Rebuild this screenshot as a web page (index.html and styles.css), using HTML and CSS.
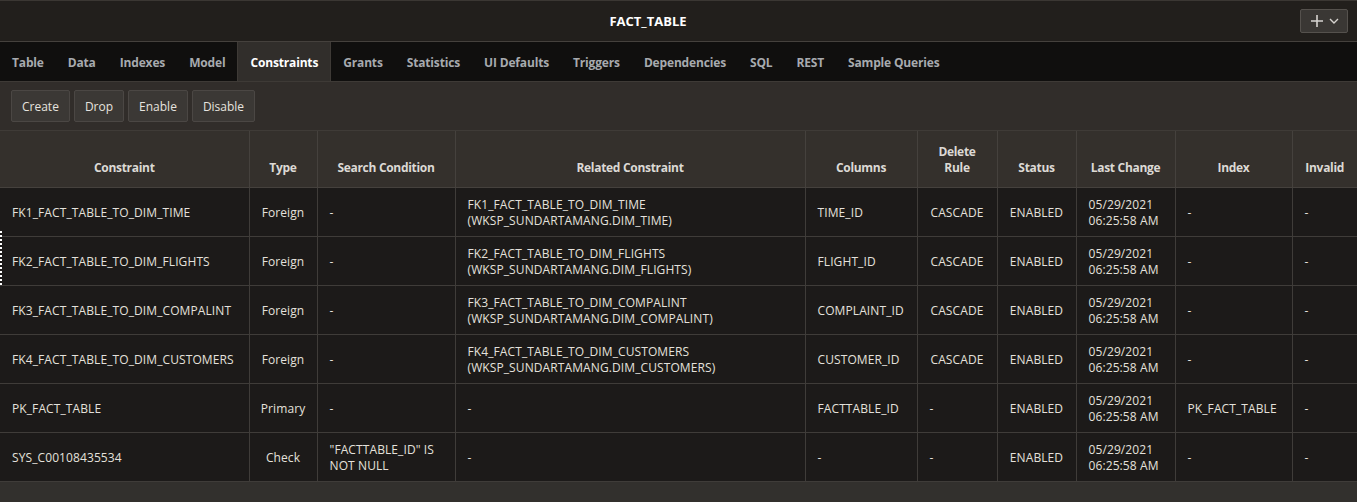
FILE: index.html
```html
<!DOCTYPE html>
<html>
<head>
<meta charset="utf-8">
<link rel="stylesheet" href="styles.css">
</head>
<body>
<div class="page">
  <header class="titlebar">
    <h1 class="title">FACT_TABLE</h1>
    <button class="menu-btn" type="button">
      <svg width="14" height="14" viewBox="0 0 14 14"><path d="M7 1v12M1 7h12" stroke="#d6d3cf" stroke-width="1.6" fill="none"/></svg>
      <svg width="10" height="8" viewBox="0 0 10 8"><path d="M1 2l4 4 4-4" stroke="#d6d3cf" stroke-width="1.4" fill="none"/></svg>
    </button>
  </header>
  <nav class="tabs">
    <span class="tab">Table</span>
    <span class="tab">Data</span>
    <span class="tab">Indexes</span>
    <span class="tab">Model</span>
    <span class="tab active">Constraints</span>
    <span class="tab">Grants</span>
    <span class="tab">Statistics</span>
    <span class="tab">UI Defaults</span>
    <span class="tab">Triggers</span>
    <span class="tab">Dependencies</span>
    <span class="tab">SQL</span>
    <span class="tab">REST</span>
    <span class="tab">Sample Queries</span>
  </nav>
  <div class="toolbar">
    <button class="btn" type="button">Create</button>
    <button class="btn" type="button">Drop</button>
    <button class="btn" type="button">Enable</button>
    <button class="btn" type="button">Disable</button>
  </div>
  <table class="grid">
    <colgroup>
      <col class="c1"><col class="c2"><col class="c3"><col class="c4"><col class="c5">
      <col class="c6"><col class="c7"><col class="c8"><col class="c9"><col class="c10">
    </colgroup>
    <thead>
      <tr>
        <th>Constraint</th><th>Type</th><th>Search Condition</th><th>Related Constraint</th><th>Columns</th>
        <th>Delete<br>Rule</th><th>Status</th><th>Last Change</th><th>Index</th><th>Invalid</th>
      </tr>
    </thead>
    <tbody>
      <tr>
        <td class="first">FK1_FACT_TABLE_TO_DIM_TIME</td><td class="ctr">Foreign</td><td>-</td>
        <td>FK1_FACT_TABLE_TO_DIM_TIME<br>(WKSP_SUNDARTAMANG.DIM_TIME)</td><td>TIME_ID</td>
        <td class="ctr">CASCADE</td><td class="ctr">ENABLED</td><td>05/29/2021<br>06:25:58 AM</td><td>-</td><td>-</td>
      </tr>
      <tr>
        <td class="first focus">FK2_FACT_TABLE_TO_DIM_FLIGHTS</td><td class="ctr">Foreign</td><td>-</td>
        <td>FK2_FACT_TABLE_TO_DIM_FLIGHTS<br>(WKSP_SUNDARTAMANG.DIM_FLIGHTS)</td><td>FLIGHT_ID</td>
        <td class="ctr">CASCADE</td><td class="ctr">ENABLED</td><td>05/29/2021<br>06:25:58 AM</td><td>-</td><td>-</td>
      </tr>
      <tr>
        <td class="first">FK3_FACT_TABLE_TO_DIM_COMPALINT</td><td class="ctr">Foreign</td><td>-</td>
        <td>FK3_FACT_TABLE_TO_DIM_COMPALINT<br>(WKSP_SUNDARTAMANG.DIM_COMPALINT)</td><td>COMPLAINT_ID</td>
        <td class="ctr">CASCADE</td><td class="ctr">ENABLED</td><td>05/29/2021<br>06:25:58 AM</td><td>-</td><td>-</td>
      </tr>
      <tr>
        <td class="first">FK4_FACT_TABLE_TO_DIM_CUSTOMERS</td><td class="ctr">Foreign</td><td>-</td>
        <td>FK4_FACT_TABLE_TO_DIM_CUSTOMERS<br>(WKSP_SUNDARTAMANG.DIM_CUSTOMERS)</td><td>CUSTOMER_ID</td>
        <td class="ctr">CASCADE</td><td class="ctr">ENABLED</td><td>05/29/2021<br>06:25:58 AM</td><td>-</td><td>-</td>
      </tr>
      <tr>
        <td class="first">PK_FACT_TABLE</td><td class="ctr">Primary</td><td>-</td>
        <td>-</td><td>FACTTABLE_ID</td>
        <td>-</td><td class="ctr">ENABLED</td><td>05/29/2021<br>06:25:58 AM</td><td>PK_FACT_TABLE</td><td>-</td>
      </tr>
      <tr>
        <td class="first">SYS_C00108435534</td><td class="ctr">Check</td><td>"FACTTABLE_ID" IS<br>NOT NULL</td>
        <td>-</td><td>-</td>
        <td>-</td><td class="ctr">ENABLED</td><td>05/29/2021<br>06:25:58 AM</td><td>-</td><td>-</td>
      </tr>
    </tbody>
  </table>
  <div class="footer"></div>
</div>
</body>
</html>
```
FILE: styles.css
```css
* { box-sizing: border-box; }
html, body { margin: 0; padding: 0; }
body {
  background: #32302d;
  font-family: "Open Sans", "Noto Sans", sans-serif;
  font-size: 12px;
  color: #e4e1dc;
}
.page { width: 1357px; height: 502px; overflow: hidden; }

.titlebar {
  height: 42px;
  background: #221f1c;
  border-top: 1px solid #3b3733;
  border-bottom: 1px solid #45413d;
  display: flex;
  align-items: center;
}
.title {
  flex: 1;
  margin: 0;
  text-align: center;
  font-size: 13px;
  font-weight: 700;
  color: #ffffff;
  letter-spacing: 0;
}
.menu-btn {
  flex: none;
  margin: 0 9px 1px 4px;
  width: 48px;
  height: 24px;
  background: #3a3734;
  border: 1px solid #55514d;
  border-radius: 2px;
  display: flex;
  align-items: center;
  justify-content: center;
  gap: 5px;
  padding: 0;
}

.tabs {
  height: 40px;
  background: #100f0e;
  border-bottom: 1px solid #3e3a36;
  display: flex;
  align-items: stretch;
}
.tab {
  display: flex;
  align-items: center;
  padding: 1px 12px 0;
  font-weight: 700;
  color: #a7aaae;
  letter-spacing: -0.16px;
}
.tab.active {
  background: #312e2b;
  color: #ffffff;
  border-left: 1px solid #3e3a36;
  border-right: 1px solid #3e3a36;
}

.toolbar {
  height: 49px;
  background: #312d2a;
  border-bottom: 1px solid #3f3b37;
  display: flex;
  align-items: center;
  gap: 4px;
  padding: 0 11px;
}
.btn {
  height: 32px;
  padding: 0 10px;
  background: #3b3835;
  border: 1px solid #4b4744;
  border-radius: 2px;
  color: #e6e3df;
  font-family: inherit;
  font-size: 12px;
  letter-spacing: 0;
}

.grid {
  width: 1357px;
  border-collapse: collapse;
  table-layout: fixed;
}
.c1 { width: 249px; }
.c2 { width: 68px; }
.c3 { width: 138px; }
.c4 { width: 350px; }
.c5 { width: 112px; }
.c6 { width: 80px; }
.c7 { width: 79px; }
.c8 { width: 99px; }
.c9 { width: 117px; }
.c10 { width: 65px; }

.grid th {
  height: 56px;
  background: #34302c;
  border: 1px solid #45413d;
  border-top: none;
  color: #dcd9d5;
  font-weight: 700;
  font-size: 12px;
  line-height: 16px;
  vertical-align: bottom;
  padding: 0 4px 11px;
  text-align: center;
  letter-spacing: -0.3px;
}
.grid td {
  height: 49px;
  background: #1c1a19;
  border: 1px solid #3f3c39;
  padding: 2px 12px 0;
  line-height: 16px;
  vertical-align: middle;
  white-space: nowrap;
  letter-spacing: 0.1px;
}
.grid th:first-child, .grid td:first-child { border-left: none; }
.grid th:last-child, .grid td:last-child { border-right: none; }
.grid td.ctr { text-align: center; padding: 2px 2px 0; }
.focus { position: relative; }
.focus::before {
  content: "";
  position: absolute;
  left: 0;
  top: -6px;
  bottom: 0;
  border-left: 2px dotted #ffffff;
}
.footer { height: 21px; background: #32302d; }
```
